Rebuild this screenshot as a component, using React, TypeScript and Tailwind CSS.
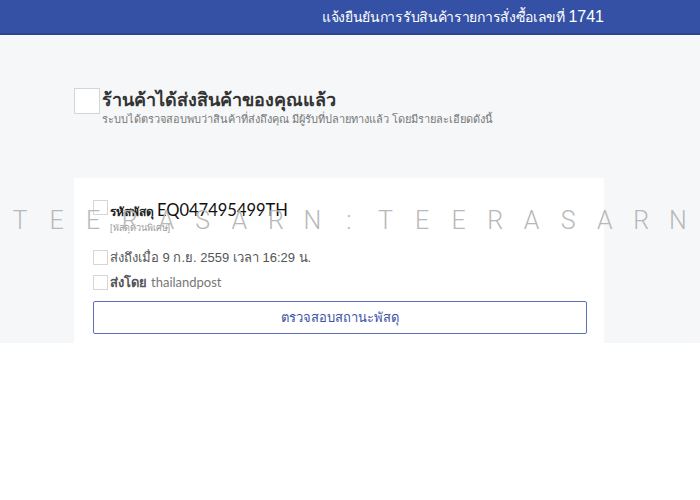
import React from "react";

const wm = "TEERASARN:TEERASARN";

function Box({ className = "" }: { className?: string }) {
  return <span className={`inline-block shrink-0 border border-[#d6d6d6] bg-white ${className}`} />;
}

export default function App() {
  return (
    <div className="relative min-h-[500px] w-[700px] bg-white font-['Liberation_Sans',sans-serif]">
      {/* Header */}
      <header className="h-[35px] border-b-2 border-[#2d4590] bg-[#3451a5]">
        <div className="ml-[74px] flex h-full w-[530px] items-center justify-end">
          <h1 className="text-[14px] tracking-[-0.3px] text-white">
            แจ้งยืนยันการรับสินค้ารายการสั่งซื้อเลขที่ <span className="text-[16px] tracking-normal">1741</span>
          </h1>
        </div>
      </header>

      {/* Body */}
      <main className="h-[308px] overflow-hidden bg-[#f6f7f9]">
        <div className="ml-[74px] w-[530px] pt-[53px]">
          <div className="flex items-start">
            <Box className="h-[26px] w-[26px] bg-transparent" />
            <div className="ml-[2px]">
              <h2 className="text-[18px] font-bold leading-[24px] text-[#333]">ร้านค้าได้ส่งสินค้าของคุณแล้ว</h2>
              <p className="text-[11px] leading-[14px] text-[#777]">
                ระบบได้ตรวจสอบพบว่าสินค้าที่ส่งถึงคุณ มีผู้รับที่ปลายทางแล้ว โดยมีรายละเอียดดังนี้
              </p>
            </div>
          </div>

          <section className="mt-[52px] h-[200px] bg-white px-[19px] pt-[22px]">
            <div className="flex items-start">
              <Box className="h-[15px] w-[15px]" />
              <div className="ml-[2px]">
                <p className="flex items-baseline leading-[20px]">
                  <span className="text-[12px] font-bold text-[#222]">รหัสพัสดุ</span>
                  <span className="ml-[3px] font-['Lato',sans-serif] text-[16.5px] text-[#111]">EQ047495499TH</span>
                </p>
                <p className="text-[9px] leading-[12px] text-[#999]">[พัสดุด่วนพิเศษ]</p>
              </div>
            </div>

            <div className="mt-[14px] flex items-center">
              <Box className="h-[15px] w-[15px]" />
              <span className="ml-[2px] text-[13px] text-[#555]">
                ส่งถึงเมื่อ 9 ก.ย. 2559 เวลา 16:29 น.
              </span>
            </div>
            <div className="mt-[5px] flex items-center">
              <Box className="h-[15px] w-[15px]" />
              <span className="ml-[2px] text-[13px] font-bold text-[#555]">ส่งโดย</span>
              <span className="ml-[4px] font-['Lato',sans-serif] text-[13px] text-[#777]">thailandpost</span>
            </div>

            <button className="mt-[9px] flex h-[33px] w-[494px] items-center justify-center rounded-[2px] border border-[#5b70b7] bg-white text-[13px] text-[#3a53a4]">
              ตรวจสอบสถานะพัสดุ
            </button>
          </section>
        </div>
      </main>

      {/* Watermark */}
      <div className="pointer-events-none absolute left-0 top-[206px] flex w-[700px] justify-between pl-[10px] pr-[12px]">
        {wm.split("").map((c, i) => (
          <span key={i} className="w-[20px] text-center font-['Roboto',sans-serif] text-[25px] font-light leading-[30px] text-[#b8b8b8]">
            {c}
          </span>
        ))}
      </div>
    </div>
  );
}
